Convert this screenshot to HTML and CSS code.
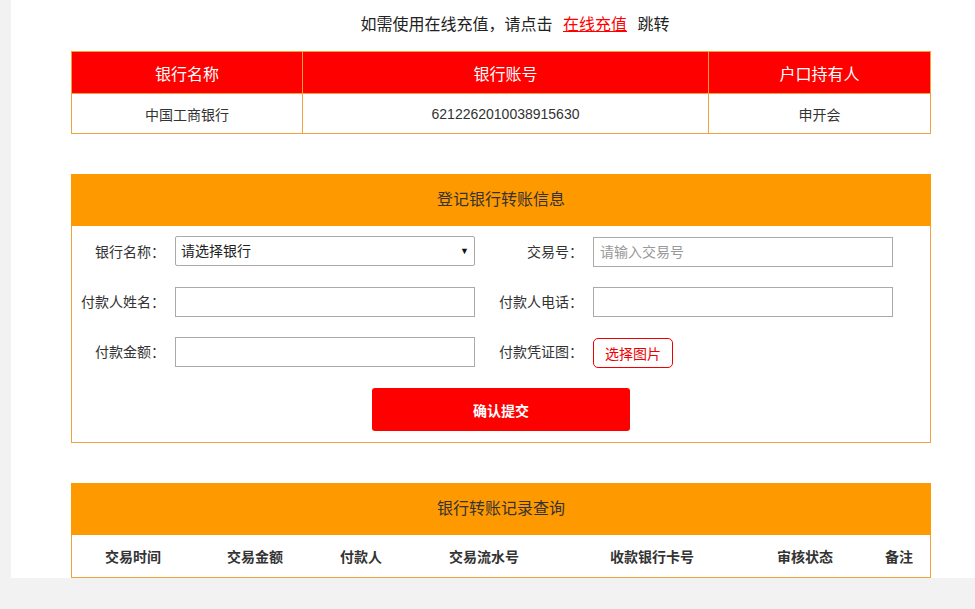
FILE: index.html
```html
<!DOCTYPE html>
<html lang="zh-CN">
<head>
  <meta charset="UTF-8">
  <title>银行转账充值</title>
  <link rel="stylesheet" href="styles.css">
</head>
<body>
  <div class="page">
    <div class="wrap">
      <p class="tip">如需使用在线充值，请点击 <a href="#" class="tip-link">在线充值</a> 跳转</p>

      <table class="bank-table">
        <tr>
          <th class="col-name">银行名称</th>
          <th class="col-account">银行账号</th>
          <th>户口持有人</th>
        </tr>
        <tr>
          <td>中国工商银行</td>
          <td>6212262010038915630</td>
          <td>申开会</td>
        </tr>
      </table>

      <div class="panel">
        <div class="panel-title">登记银行转账信息</div>
        <form class="panel-body">
          <div class="form-grid">
            <label class="form-label">银行名称：</label>
            <div class="select-box">
              <select class="form-select">
                <option>请选择银行</option>
                <option>中国工商银行</option>
              </select>
            </div>
            <label class="form-label">交易号：</label>
            <input class="form-input" type="text" placeholder="请输入交易号">

            <label class="form-label">付款人姓名：</label>
            <input class="form-input" type="text">
            <label class="form-label">付款人电话：</label>
            <input class="form-input" type="text">

            <label class="form-label">付款金额：</label>
            <input class="form-input" type="text">
            <label class="form-label">付款凭证图：</label>
            <div><button type="button" class="pick-button">选择图片</button></div>
          </div>
          <div class="submit-row">
            <button type="button" class="submit-button">确认提交</button>
          </div>
        </form>
      </div>

      <div class="panel panel-last">
        <div class="panel-title">银行转账记录查询</div>
        <table class="record-table">
          <tr>
            <th style="width: 122px">交易时间</th>
            <th style="width: 122px">交易金额</th>
            <th style="width: 90px">付款人</th>
            <th style="width: 156px">交易流水号</th>
            <th style="width: 180px">收款银行卡号</th>
            <th style="width: 126px">审核状态</th>
            <th>备注</th>
          </tr>
        </table>
      </div>
    </div>
  </div>
</body>
</html>
```

FILE: styles.css
```css
body {
  margin: 0;
  background: #f2f2f2;
  font-family: "Liberation Sans", "Noto Sans CJK SC", sans-serif;
  color: #333;
}
.page {
  margin-left: 11px;
  background: #fff;
  padding-top: 15px;
  overflow: hidden;
}
.wrap {
  width: 860px;
  margin-left: 60px;
}
.tip {
  margin: 0;
  padding-left: 28px;
  text-align: center;
  font-size: 16px;
  line-height: 20px;
  color: #222;
}
.tip-link {
  color: #f00;
  margin: 0 6px;
}
.bank-table {
  width: 860px;
  margin-top: 16px;
  border-collapse: collapse;
  border: 1px solid #f0a33a;
  font-size: 14px;
}
.bank-table th,
.bank-table td {
  border: 1px solid #f0a33a;
  text-align: center;
  padding: 0;
}
.bank-table th {
  background: #f00;
  color: #fff;
  font-weight: normal;
  font-size: 16px;
  height: 41px;
}
.bank-table td {
  height: 39px;
  color: #333;
}
.col-name {
  width: 230px;
}
.col-account {
  width: 405px;
}
.panel {
  margin-top: 40px;
  border: 1px solid #f0a33a;
  background: #fff;
}
.panel-title {
  margin: -1px -1px 0;
  height: 52px;
  line-height: 52px;
  background: #ff9900;
  text-align: center;
  font-size: 16px;
  color: #333;
}
.panel-body {
  margin: 0;
  padding: 11px 0 11px;
}
.form-grid {
  display: grid;
  grid-template-columns: 93px 300px 98px 300px;
  column-gap: 10px;
  row-gap: 20px;
}
.form-label {
  text-align: right;
  font-size: 14px;
  line-height: 30px;
  color: #333;
  white-space: nowrap;
}
.form-input,
.form-select {
  box-sizing: border-box;
  width: 300px;
  height: 30px;
  margin: 0;
  border: 1px solid #aaa;
  background: #fff;
  font-family: inherit;
  font-size: 14px;
  font-weight: normal;
  padding: 0 6px;
  outline: none;
}
.form-input::placeholder {
  color: #999;
}
.select-box {
  position: relative;
  margin-top: -1px;
}
.form-select {
  appearance: none;
  -webkit-appearance: none;
  border-radius: 2px;
  color: #222;
  padding-left: 5px;
}
.select-box::after {
  content: "▼";
  position: absolute;
  right: 6px;
  top: 9px;
  font-size: 9px;
  line-height: 12px;
  color: #111;
  pointer-events: none;
}
.pick-button {
  box-sizing: border-box;
  height: 30px;
  width: 80px;
  margin-top: 1px;
  border: 1px solid #e00;
  border-radius: 5px;
  background: #fff;
  color: #e00;
  font-family: inherit;
  font-size: 14px;
  padding: 0;
}
.submit-row {
  margin-top: 20px;
  text-align: center;
  font-size: 0;
}
.submit-button {
  width: 258px;
  height: 43px;
  border: none;
  border-radius: 3px;
  background: #f00;
  color: #fff;
  font-family: inherit;
  font-size: 14px;
  font-weight: bold;
}
.panel-last {
  margin-top: 40px;
}
.record-table {
  width: 100%;
  border-collapse: collapse;
  font-size: 14px;
}
.record-table th {
  height: 42px;
  padding: 0;
  text-align: center;
  color: #333;
}
```
